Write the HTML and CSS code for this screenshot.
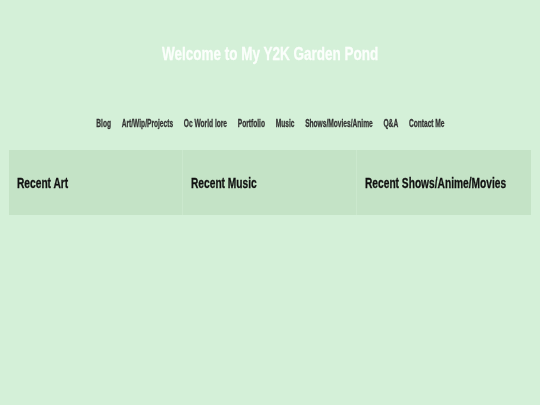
FILE: index.html
```html
<!DOCTYPE html>
<html>
<head>
<meta charset="utf-8">
<link rel="stylesheet" href="styles.css">
</head>
<body>
<header class="header">
  <h1 class="title">Welcome to My Y2K Garden Pond</h1>
</header>
<div class="nav-wrap">
  <nav class="nav">
    <a href="#">Blog</a>
    <a href="#">Art/Wip/Projects</a>
    <a href="#">Oc World lore</a>
    <a href="#">Portfolio</a>
    <a href="#">Music</a>
    <a href="#">Shows/Movies/Anime</a>
    <a href="#">Q&amp;A</a>
    <a href="#">Contact Me</a>
  </nav>
</div>
<main class="cards">
  <section class="card"><h2>Recent Art</h2></section>
  <section class="card"><h2>Recent Music</h2></section>
  <section class="card"><h2>Recent Shows/Anime/Movies</h2></section>
</main>
</body>
</html>
```
FILE: styles.css
```css
html, body {
  margin: 0;
  padding: 0;
  background: #d4f0d8;
  font-family: "Liberation Sans", Arial, sans-serif;
}
body {
  padding: 0 9px;
}
.header {
  height: 108px;
  display: flex;
  align-items: center;
  justify-content: center;
}
.title {
  margin: 0;
  color: #fbfefb;
  font-size: 18px;
  font-weight: bold;
  white-space: nowrap;
  transform: scaleX(0.75);
  transform-origin: center;
  -webkit-text-stroke: 0.3px #fbfefb;
}
.nav-wrap {
  height: 30px;
  margin-bottom: 12px;
  display: flex;
  align-items: center;
  justify-content: center;
}
.nav {
  display: flex;
  gap: 17px;
  font-size: 10.5px;
  font-weight: bold;
  white-space: nowrap;
  transform: scaleX(0.63);
  transform-origin: center;
  filter: grayscale(1);
}
.nav a {
  color: #333333;
  text-decoration: none;
  -webkit-text-stroke: 0.3px #333333;
}
.cards {
  display: grid;
  grid-template-columns: repeat(3, minmax(0, 1fr));
  background: #c4e3c6;
  height: 65px;
}
.card {
  display: flex;
  align-items: center;
  padding: 0 8px;
  min-width: 0;
  border-right: 1px solid #cbe8cd;
}
.card:last-child {
  border-right: none;
}
.card h2 {
  margin: 0;
  font-size: 15px;
  font-weight: bold;
  color: #111111;
  white-space: nowrap;
  transform: scaleX(0.68);
  transform-origin: left center;
  -webkit-text-stroke: 0.3px #111111;
}
```
